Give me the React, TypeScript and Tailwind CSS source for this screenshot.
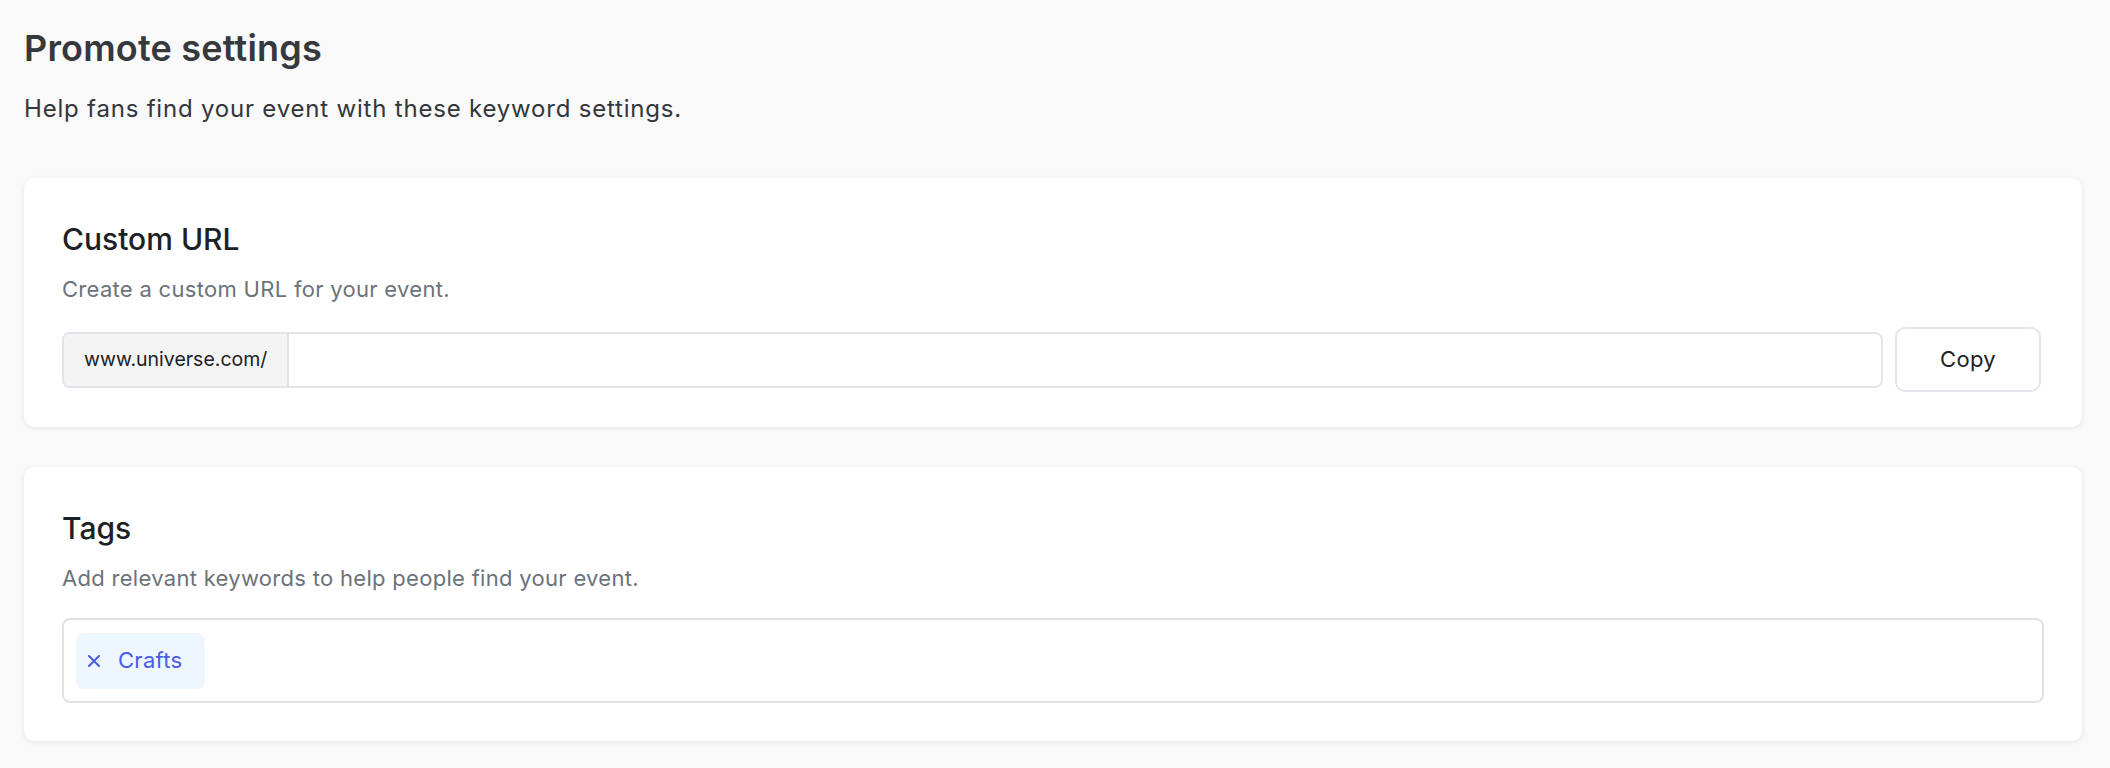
import React from 'react';

const font = { fontFamily: 'Inter, "Noto Sans", sans-serif' };

const SectionCard: React.FC<{ title: string; description: string; children: React.ReactNode; gap: string; bottom: string }> = ({
  title,
  description,
  children,
  gap,
  bottom,
}) => {
  return (
    <section className={`bg-white rounded-[10px] shadow-[0_1px_5px_rgba(0,0,0,0.09)] px-[38px] pt-[43px] ${bottom}`}>
      <h2 className="text-[30px] leading-[36px] font-medium text-[#1d2024] tracking-[0px]">{title}</h2>
      <p className="mt-[18px] text-[22px] leading-[28px] text-[#6b737b] tracking-[0.3px]">{description}</p>
      <div className={gap}>{children}</div>
    </section>
  );
};

const App: React.FC = () => {
  return (
    <div className="min-h-[768px] bg-[#f9f9f9] pl-6 pr-7 pt-[26px] pb-6" style={font}>
      <h1 className="text-[36px] leading-[44px] font-semibold text-[#35383c] tracking-[0.2px]">Promote settings</h1>
      <p className="mt-[23px] text-[24px] leading-[32px] text-[#33363b] tracking-[0.8px]">
        Help fans find your event with these keyword settings.
      </p>

      <div className="mt-[53px] flex flex-col gap-10">
        <SectionCard title="Custom URL" description="Create a custom URL for your event." gap="mt-[24px]" bottom="pb-[35px]">
          <div className="flex items-center gap-3 pr-[3px]">
            <div className="flex-1 flex h-[56px] border-2 border-[#e1e5ea] rounded-[8px] overflow-hidden">
              <span className="flex items-center px-5 bg-[#f4f4f5] border-r-2 border-[#e1e5ea] text-[19.5px] text-[#1d2024]">
                www.universe.com/
              </span>
              <input className="flex-1 px-4 text-[20px] outline-none bg-white" aria-label="Custom URL" />
            </div>
            <button className="w-[146px] h-[65px] border-2 border-[#e3e6ea] rounded-[10px] bg-white text-[22px] text-[#1d2024] tracking-[0.3px]">
              Copy
            </button>
          </div>
        </SectionCard>

        <SectionCard
          title="Tags"
          description="Add relevant keywords to help people find your event."
          gap="mt-[26px]"
          bottom="pb-[38px]"
        >
          <div className="flex items-center border-2 border-[#dfe3e8] rounded-[8px] p-3 h-[85px]">
            <span className="flex items-center h-[56px] pl-3 pr-[22px] rounded-[8px] bg-[#eef6ff] text-[#4b5be3] text-[22px] tracking-[0.3px]">
              <svg width="12" height="12" viewBox="0 0 12 12" className="mr-[18px]">
                <path d="M1 1L11 11M11 1L1 11" stroke="currentColor" strokeWidth="2" strokeLinecap="round" />
              </svg>
              Crafts
            </span>
          </div>
        </SectionCard>
      </div>
    </div>
  );
};

export default App;
